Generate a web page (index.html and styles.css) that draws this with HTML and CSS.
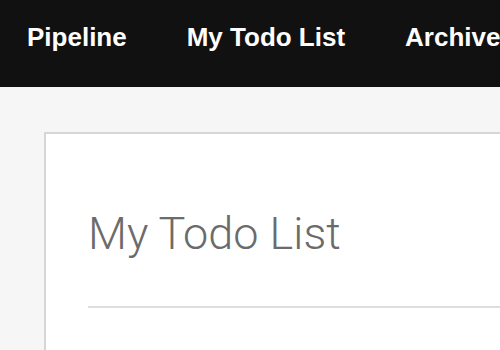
FILE: index.html
```html
<!DOCTYPE html>
<html>
<head lang="en">
    <meta charset="UTF-8">
    <title>My Todo List</title>
    <link rel="stylesheet" href="styles.css">
</head>
<body>
<div class="nav">
    <a href="#">Pipeline</a>
    <a href="#">My Todo List</a>
    <a href="#">Archive</a>
</div>
<div class="card">
    <h1 class="title">My Todo List</h1>
    <div class="rule"></div>
</div>
</body>
</html>
```

FILE: styles.css
```css
html,body{
    margin: 0;
    padding: 0;
    overflow: hidden;
}
body{
    background: #f6f6f6;
    font-family: "Liberation Sans", Arial, sans-serif;
    width: 500px;
    height: 350px;
}
.nav{
    background: #111111;
    height: 87px;
    display: flex;
    align-items: center;
    white-space: nowrap;
    overflow: hidden;
    padding-left: 27px;
    gap: 60px;
}
.nav a{
    color: #ffffff;
    text-decoration: none;
    font-weight: bold;
    font-size: 26px;
    padding-bottom: 12px;
}
.card{
    margin: 45px 0 0 44px;
    height: 216px;
    background: #ffffff;
    border-top: 2px solid #d6d6d6;
    border-left: 2px solid #d6d6d6;
    padding: 0 0 0 42px;
}
.title{
    margin: 0;
    padding-top: 70px;
    font-family: Roboto, "Liberation Sans", sans-serif;
    font-weight: 300;
    font-size: 45px;
    line-height: 60px;
    color: #6b6b6b;
}
.rule{
    margin-top: 42px;
    height: 2px;
    background: #dedede;
}
```
